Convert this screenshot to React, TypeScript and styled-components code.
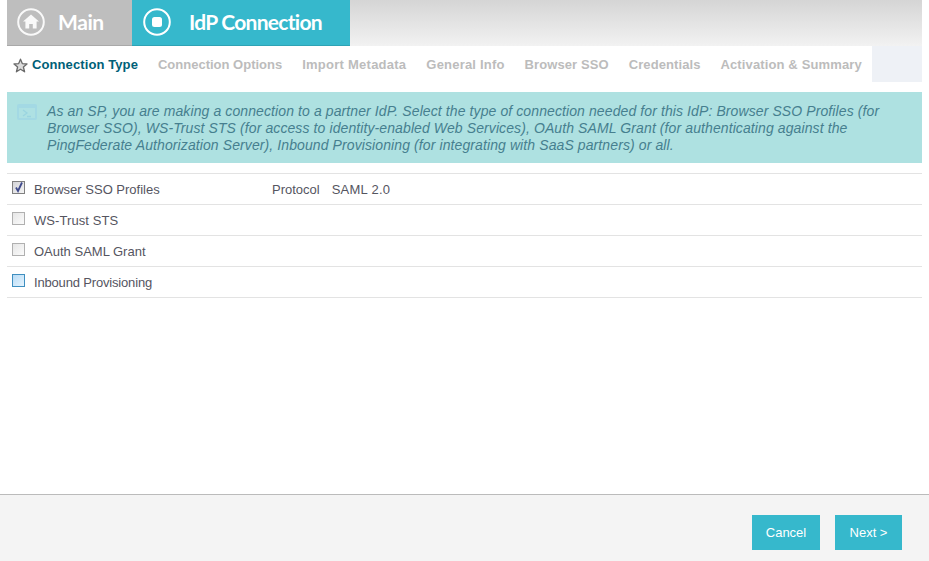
import React from "react";
import styled, { createGlobalStyle } from "styled-components";

const Global = createGlobalStyle`
  html, body { margin: 0; padding: 0; background: #fff; }
  body { font-family: "Liberation Sans", Arial, sans-serif; }
`;

const Page = styled.div`
  width: 929px;
  height: 561px;
  display: flex;
  flex-direction: column;
  overflow: hidden;
`;

const Top = styled.div`
  flex: 1;
  padding: 0 7px;
  display: flex;
  flex-direction: column;
`;

const Header = styled.header`
  height: 46px;
  display: flex;
  background: linear-gradient(#d5d5d5, #f2f2f2);
`;

const HeaderTab = styled.div<{ $active?: boolean; $width: number; $gap: number; $pad: number; $ls: number }>`
  width: ${(p) => p.$width}px;
  box-sizing: border-box;
  display: flex;
  align-items: center;
  gap: ${(p) => p.$gap}px;
  padding: 0 0 1px ${(p) => p.$pad}px;
  color: #fff;
  font-family: Lato, sans-serif;
  font-weight: 700;
  font-size: 21px;
  letter-spacing: ${(p) => p.$ls}px;
  background: ${(p) => (p.$active ? "#36b8cc" : "#bebebe")};
  border-bottom: 1px solid ${(p) => (p.$active ? "#2ea3b5" : "#a9a9a9")};
`;

const TabTitle = styled.span`
  margin-bottom: 2px;
`;

const Steps = styled.nav`
  height: 36px;
  display: flex;
  align-items: center;
`;

const Step = styled.span<{ $active?: boolean; $ls: number }>`
  font-size: 13px;
  font-weight: 700;
  white-space: nowrap;
  margin-right: 20px;
  letter-spacing: ${(p) => p.$ls}px;
  color: ${(p) => (p.$active ? "#005f78" : "#bcbcbc")};

  &:last-of-type {
    margin-right: 0;
  }
`;

const StarWrap = styled.span`
  display: flex;
  margin: 2px 4px 0 6px;
`;

const StepFiller = styled.div`
  flex: none;
  margin-left: auto;
  width: 50px;
  height: 36px;
  background: #eef1f6;
`;

const Notice = styled.div`
  margin-top: 10px;
  height: 71px;
  box-sizing: border-box;
  background: #aee1e1;
  display: flex;
  padding: 11px 10px 0 10px;
  gap: 10px;
`;

const NoticeText = styled.p`
  margin: 0;
  font-size: 14px;
  line-height: 17px;
  font-style: italic;
  letter-spacing: 0.1px;
  white-space: nowrap;
  color: #467f8f;
`;

const Options = styled.div`
  margin-top: 10px;
  border-top: 1px solid #e3e3e3;
`;

const Row = styled.div`
  height: 30px;
  display: flex;
  align-items: center;
  border-bottom: 1px solid #e3e3e3;
  font-size: 13px;
  color: #55555f;
`;

const Box = styled.span<{ $focus?: boolean; $checked?: boolean }>`
  width: 11px;
  height: 11px;
  margin: -3px 0 0 5px;
  border: 1px solid ${(p) => (p.$focus ? "#3f8fc0" : p.$checked ? "#808080" : "#b0b0b0")};
  background: ${(p) =>
    p.$focus
      ? "linear-gradient(135deg,#b9dcf6,#e5f3fd)"
      : p.$checked
      ? "linear-gradient(135deg,#d4d4d8,#f4f4f4)"
      : "linear-gradient(135deg,#e6e6e6,#fbfbfb)"};
  display: flex;
  position: relative;
`;

const Label = styled.span<{ $ls?: number }>`
  margin-left: 9px;
  width: 238px;
  letter-spacing: ${(p) => p.$ls ?? 0}px;
`;

const ProtocolName = styled.span`
  margin-right: 12px;
`;

const ProtocolValue = styled.span`
  letter-spacing: 0.25px;
`;

const Footer = styled.footer`
  height: 67px;
  box-sizing: border-box;
  background: #f4f4f4;
  border-top: 1px solid #bbbbbb;
  display: flex;
  justify-content: flex-end;
  align-items: flex-start;
  gap: 15px;
  padding: 20px 27px 0 0;
`;

const Btn = styled.button<{ $w: number }>`
  width: ${(p) => p.$w}px;
  height: 35px;
  border: 0;
  padding: 0;
  background: #36b8cc;
  color: #fff;
  font-family: "Liberation Sans", Arial, sans-serif;
  font-size: 13px;
`;

const Tick = styled.svg`
  position: absolute;
  left: 1px;
  top: -1px;
`;

const TerminalIcon = styled.svg`
  flex: none;
  margin-top: 1px;
`;

const HomeIcon = () => (
  <svg width="28" height="28" viewBox="0 0 28 28">
    <circle cx="14" cy="14" r="12.8" fill="none" stroke="#fff" strokeWidth="2" opacity="0.9" />
    <path d="M14 6.5 L22 13.5 H19.6 V20.5 H15.8 V16 H12.2 V20.5 H8.4 V13.5 H6 Z" fill="#fff" opacity="0.9" />
  </svg>
);

const StopIcon = () => (
  <svg width="28" height="28" viewBox="0 0 28 28">
    <circle cx="14" cy="14" r="12.8" fill="none" stroke="#fff" strokeWidth="2" />
    <rect x="9" y="9" width="10" height="10" rx="2.5" fill="#fff" />
  </svg>
);

const Star = () => (
  <svg width="15" height="15" viewBox="0 0 15 15">
    <path d="M7.5 1.2 L9.3 5.6 L14 6 L10.4 9 L11.6 13.8 L7.5 11.2 L3.4 13.8 L4.6 9 L1 6 L5.7 5.6 Z" fill="#dcdcdc" stroke="#6a6a6a" strokeWidth="1.3" strokeLinejoin="round" />
  </svg>
);

const Terminal = () => (
  <TerminalIcon width="20" height="16" viewBox="0 0 20 16">
    <rect x="0.5" y="0.5" width="19" height="15" rx="1" fill="#a3d9e4" stroke="#a3d9e4" />
    <rect x="2" y="4" width="16" height="10" fill="#aee1e3" />
    <path d="M6 6 L10 9 L6 12 M10 12.5 H14" fill="none" stroke="#9ad5e0" strokeWidth="1.3" />
  </TerminalIcon>
);

const steps: [string, number][] = [
  ["Connection Options", 0],
  ["Import Metadata", 0.25],
  ["General Info", 0.2],
  ["Browser SSO", 0.09],
  ["Credentials", 0.09],
  ["Activation & Summary", 0.13],
];

export default function App() {
  return (
    <Page>
      <Global />
      <Top>
        <Header>
          <HeaderTab $width={125} $gap={13} $pad={10} $ls={-0.4}><HomeIcon /><TabTitle>Main</TabTitle></HeaderTab>
          <HeaderTab $active $width={218} $gap={18} $pad={11} $ls={-0.72}><StopIcon /><TabTitle>IdP Connection</TabTitle></HeaderTab>
        </Header>
        <Steps>
          <StarWrap><Star /></StarWrap>
          <Step $active $ls={0.1}>Connection Type</Step>
          {steps.map(([s, ls]) => <Step key={s} $ls={ls}>{s}</Step>)}
          <StepFiller />
        </Steps>
        <Notice>
          <Terminal />
          <NoticeText>
            As an SP, you are making a connection to a partner IdP. Select the type of connection needed for this IdP: Browser SSO Profiles (for<br />
            Browser SSO), WS-Trust STS (for access to identity-enabled Web Services), OAuth SAML Grant (for authenticating against the<br />
            PingFederate Authorization Server), Inbound Provisioning (for integrating with SaaS partners) or all.
          </NoticeText>
        </Notice>
        <Options>
          <Row>
            <Box $checked>
              <Tick width="10" height="12" viewBox="0 0 10 12"><path d="M2 6.5 L4 10 L8 1.5" fill="none" stroke="#3f4a8c" strokeWidth="1.8" /></Tick>
            </Box>
            <Label>Browser SSO Profiles</Label>
            <ProtocolName>Protocol</ProtocolName>
            <ProtocolValue>SAML 2.0</ProtocolValue>
          </Row>
          <Row><Box /><Label $ls={0.08}>WS-Trust STS</Label></Row>
          <Row><Box /><Label>OAuth SAML Grant</Label></Row>
          <Row><Box $focus /><Label $ls={-0.17}>Inbound Provisioning</Label></Row>
        </Options>
      </Top>
      <Footer>
        <Btn $w={68}>Cancel</Btn>
        <Btn $w={67}>Next &gt;</Btn>
      </Footer>
    </Page>
  );
}
